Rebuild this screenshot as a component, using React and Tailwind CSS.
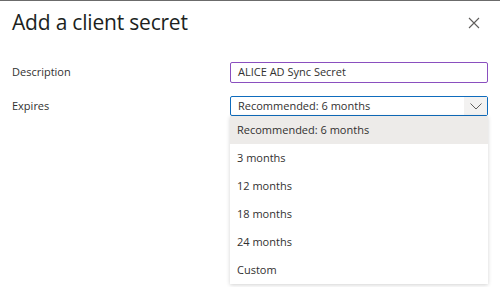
import React from "react";

export default function App() {
  const options = ["3 months", "12 months", "18 months", "24 months", "Custom"];
  return (
    <div className="w-[500px] h-[287px] bg-white border-t border-[#6b6b6b] overflow-hidden text-[#323130] font-['Open_Sans',sans-serif]">
      <div className="flex items-start justify-between pl-[12px] pr-[20px] pt-[7px]">
        <h1 className="text-[21px] leading-[28px] font-normal text-[#201f1e] tracking-[-0.2px]">Add a client secret</h1>
        <svg width="12" height="12" viewBox="0 0 12 12" className="mt-[9px]">
          <path d="M1 1 L11 11 M11 1 L1 11" stroke="#605e5c" strokeWidth="1.1" fill="none" />
        </svg>
      </div>
      <div className="mt-[26px] flex items-center pl-[12px] pr-[12px]">
        <div className="w-[218px] text-[11px]">Description</div>
        <div className="flex-1 h-[21px] border border-[#8a4fbf] rounded-[2px] flex items-center pl-[7px] text-[11px]">
          ALICE AD Sync Secret
        </div>
      </div>
      <div className="mt-[13px] flex items-start pl-[12px] pr-[12px]">
        <div className="w-[218px] text-[11px] h-[20px] flex items-center">Expires</div>
        <div className="flex-1 flex flex-col">
          <div className="h-[20px] border-[1.5px] border-[#0f6cbd] rounded-[2px] flex items-center pl-[7px] text-[11px]">
            <span className="flex-1">Recommended: 6 months</span>
            <div className="w-[23px] h-full bg-[#f3f2f1] flex items-center justify-center">
              <svg width="12" height="7" viewBox="0 0 12 7">
                <path d="M0.5 0.5 L6 6 L11.5 0.5" stroke="#605e5c" strokeWidth="1" fill="none" />
              </svg>
            </div>
          </div>
          <div className="bg-white shadow-[0_1px_4px_rgba(0,0,0,0.18)] text-[11px]">
            <div className="h-[28px] bg-[#edebe9] flex items-center pl-[7px]">Recommended: 6 months</div>
            {options.map((o) => (
              <div key={o} className="h-[28px] flex items-center pl-[7px]">{o}</div>
            ))}
          </div>
        </div>
      </div>
    </div>
  );
}
